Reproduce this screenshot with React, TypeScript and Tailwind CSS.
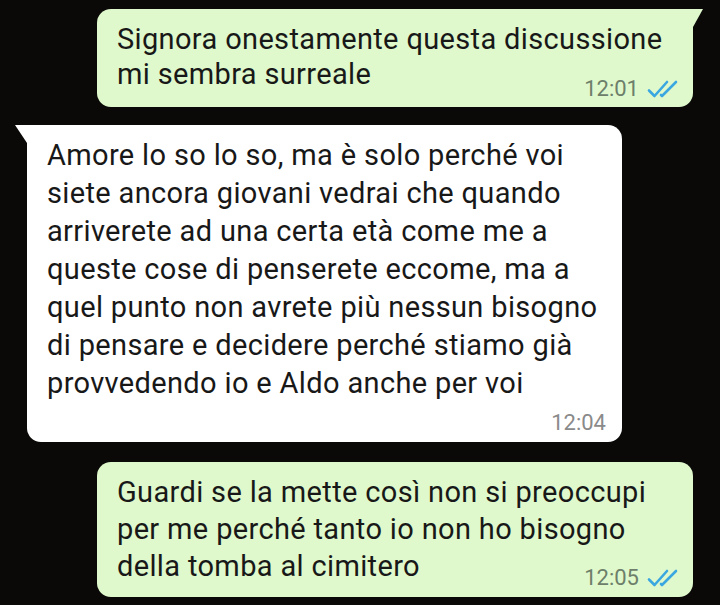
import React from "react";

function Ticks() {
  return (
    <svg width="31" height="18" viewBox="0 0 31 18" className="ml-[8px]">
      <path d="M2 10.5 L7.5 16 L20 2" fill="none" stroke="#3ba7e0" strokeWidth="2.6" strokeLinecap="round" strokeLinejoin="round" />
      <path d="M14 15 L15 16 L29 2" fill="none" stroke="#3ba7e0" strokeWidth="2.6" strokeLinecap="round" strokeLinejoin="round" />
    </svg>
  );
}

export default function App() {
  const font = { fontFamily: "Roboto, 'Noto Sans', sans-serif" };
  return (
    <div className="w-[720px] h-[605px] overflow-hidden bg-[#0a0908] flex flex-col" style={font}>
      {/* Bubble 1 */}
      <div className="relative ml-[97px] mt-[9px] w-[596px] h-[98px] bg-[#dff9cc] rounded-[14px] rounded-tr-none pl-[20px] pr-[15px] pt-[13px] flex flex-col">
        <div className="absolute top-0 right-[-10px] w-0 h-0 border-t-[18px] border-t-[#dff9cc] border-r-[10px] border-r-transparent" />
        <div className="text-[29px] leading-[35px] text-[#181818] tracking-[0.35px]">
          Signora onestamente questa discussione
          <br />
          mi sembra surreale
        </div>
        <div className="flex items-center justify-end -mt-[16px] h-[26px]">
          <span className="text-[22px] leading-[26px] text-[#6d7f6a]">12:01</span>
          <Ticks />
        </div>
      </div>

      {/* Bubble 2 */}
      <div className="relative ml-[27px] mt-[18px] w-[595px] h-[317px] bg-white rounded-[14px] rounded-tl-none pl-[20px] pr-[16px] pt-[11px] flex flex-col">
        <div className="absolute top-0 left-[-12px] w-0 h-0 border-t-[18px] border-t-white border-l-[12px] border-l-transparent" />
        <div className="text-[29px] leading-[38px] text-[#181818] tracking-[0.35px]">
          Amore lo so lo so, ma è solo perché voi
          <br />
          siete ancora giovani vedrai che quando
          <br />
          arriverete ad una certa età come me a
          <br />
          queste cose di penserete eccome, ma a
          <br />
          quel punto non avrete più nessun bisogno
          <br />
          di pensare e decidere perché stiamo già
          <br />
          provvedendo io e Aldo anche per voi
        </div>
        <div className="flex items-center justify-end mt-[8px] h-[26px]">
          <span className="text-[22px] leading-[26px] text-[#8a8a8a]">12:04</span>
        </div>
      </div>

      {/* Bubble 3 */}
      <div className="ml-[97px] mt-[20px] w-[596px] h-[135px] bg-[#dff9cc] rounded-[14px] pl-[20px] pr-[15px] pt-[12px] flex flex-col">
        <div className="text-[29px] leading-[37px] text-[#181818] tracking-[0.35px]">
          Guardi se la mette così non si preoccupi
          <br />
          per me perché tanto io non ho bisogno
          <br />
          della tomba al cimitero
        </div>
        <div className="flex items-center justify-end -mt-[20px] h-[26px]">
          <span className="text-[22px] leading-[26px] text-[#6d7f6a]">12:05</span>
          <Ticks />
        </div>
      </div>
    </div>
  );
}
